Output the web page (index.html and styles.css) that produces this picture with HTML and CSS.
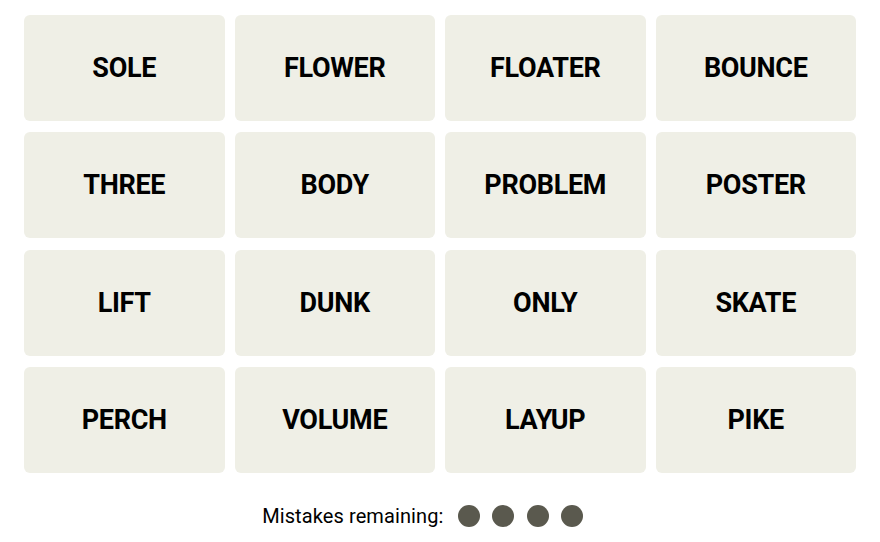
FILE: index.html
```html
<!DOCTYPE html>
<html>
<head>
<meta charset="utf-8">
<link rel="stylesheet" href="styles.css">
</head>
<body>
<main class="game">
  <section class="board">
    <div class="tile">SOLE</div>
    <div class="tile">FLOWER</div>
    <div class="tile">FLOATER</div>
    <div class="tile">BOUNCE</div>
    <div class="tile">THREE</div>
    <div class="tile">BODY</div>
    <div class="tile">PROBLEM</div>
    <div class="tile">POSTER</div>
    <div class="tile">LIFT</div>
    <div class="tile">DUNK</div>
    <div class="tile">ONLY</div>
    <div class="tile">SKATE</div>
    <div class="tile">PERCH</div>
    <div class="tile">VOLUME</div>
    <div class="tile">LAYUP</div>
    <div class="tile">PIKE</div>
  </section>
  <div class="mistakes">
    <span class="label">Mistakes remaining:</span>
    <span class="dots">
      <span class="dot"></span>
      <span class="dot"></span>
      <span class="dot"></span>
      <span class="dot"></span>
    </span>
  </div>
</main>
</body>
</html>
```

FILE: styles.css
```css
html, body {
  margin: 0;
  padding: 0;
  background: #ffffff;
}

.game {
  width: 832px;
  padding: 15px 0 0 24px;
  font-family: Roboto, "Liberation Sans", sans-serif;
}

.board {
  display: grid;
  grid-template-columns: repeat(4, 200.5px);
  grid-auto-rows: 106px;
  column-gap: 10px;
  row-gap: 11.3px;
}

.tile {
  background: #efefe6;
  border-radius: 6px;
  display: flex;
  align-items: center;
  justify-content: center;
  font-weight: 700;
  font-size: 27px;
  letter-spacing: -0.3px;
  color: #000;
}

.mistakes {
  display: flex;
  align-items: center;
  justify-content: center;
  margin-top: 32px;
  padding-right: 35px;
  height: 22px;
}

.label {
  font-size: 20px;
  letter-spacing: 0.1px;
  color: #000;
  margin-right: 14.5px;
}

.dots {
  display: flex;
  gap: 12.3px;
}

.dot {
  width: 22px;
  height: 22px;
  border-radius: 50%;
  background: #5a594e;
}
```
